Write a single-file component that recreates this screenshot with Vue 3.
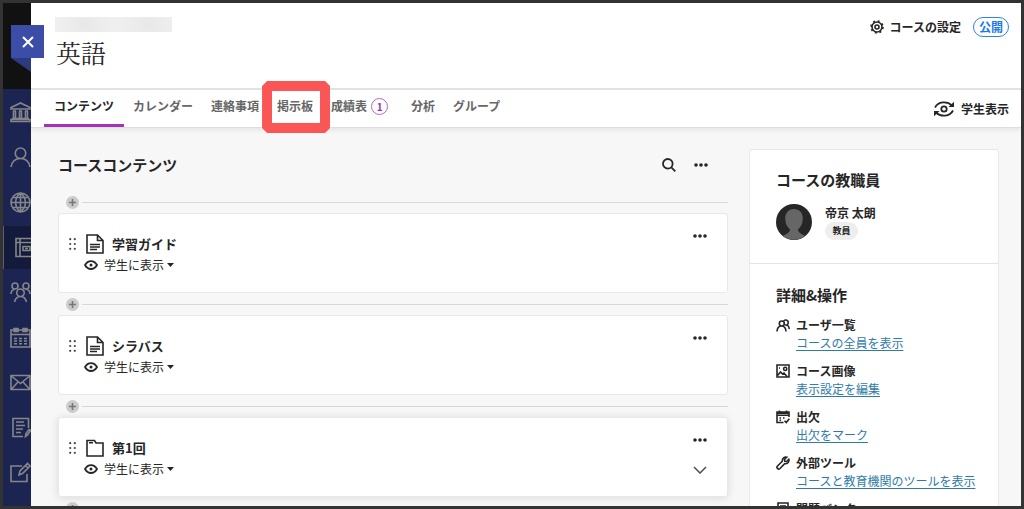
<script setup>
import { ref } from 'vue';

const activeTab = ref('contents');

const tabs = [
  { id: 'contents', label: 'コンテンツ' },
  { id: 'calendar', label: 'カレンダー' },
  { id: 'announcements', label: '連絡事項' },
  { id: 'discussions', label: '掲示板', marked: true },
  { id: 'gradebook', label: '成績表', count: 1 },
  { id: 'analytics', label: '分析' },
  { id: 'groups', label: 'グループ' },
];

const items = [
  { id: 1, title: '学習ガイド', type: 'document' },
  { id: 2, title: 'シラバス', type: 'document' },
  { id: 3, title: '第1回', type: 'folder' },
];

const details = [
  { icon: 'users', title: 'ユーザ一覧', link: 'コースの全員を表示' },
  { icon: 'image', title: 'コース画像', link: '表示設定を編集' },
  { icon: 'attendance', title: '出欠', link: '出欠をマーク' },
  { icon: 'wrench', title: '外部ツール', link: 'コースと教育機関のツールを表示' },
  { icon: 'bank', title: '問題バンク', link: '問題バンクの管理' },
];

const detailIcons = {
  users:
    'M1 13.500c.2-3.500 1.800-5.500 4.500-5.500s4.300 2 4.500 5.500M5.800 3a2.500 2.500 0 1 1 0 5 2.500 2.500 0 0 1 0-5M7.500 3.500a2.500 2.500 0 1 1 3.500 3.200M9 7c2.500-.3 4 1 4.200 4',
  image:
    'M1 1h12v12H1zM1.500 11.500l3-3.500 2 2 1.500-1 3 3.500M9.200 3.300a1.600 1.600 0 1 1 0 3.200 1.600 1.600 0 0 1 0-3.200M3 4h1',
  attendance:
    'M7.500 12.500H1V2h12v5M1 3.200h12M1 5.200h12M3.500.5V3M10.500.5V3M3.500 8h1.500M7 8h1.500M3.500 10.300h1.500M8.500 10.800l1.800 1.800 3-3.800',
  wrench:
    'M12.800 3.200l-2.300 2.300-1.700-.3-.3-1.700L10.800 1.200C8.500.5 6 2.200 6.300 5.300L1.500 10c-1.600 1.700.8 4.100 2.500 2.500l4.700-4.800c3 .3 4.900-2.200 4.100-4.500zM2.800 11.200h.1',
  bank: 'M2 1h10v12H2zM4 4h6M4 7h6M4 10h6',
};

const navItems = [
  {
    label: '教育機関',
    path: 'M1 7V5.500L10.500 1 20 5.500V7zM3 9h3M9 9h3M15 9h3M3.500 9v7M5.500 9v7M9.500 9v7M11.500 9v7M15.500 9v7M17.500 9v7M2 16.500h17M1 19.500h19v-2H1z',
  },
  {
    label: 'プロファイル',
    path: 'M10.500 1a5 5 0 1 1 0 10.500 5 5 0 0 1 0-10.500M1 20c1-5.500 4.500-8.500 9.500-8.500S19 14.500 20 20',
  },
  {
    label: 'アクティビティ',
    path: 'M10.500 1a9.500 9.500 0 1 1 0 19 9.500 9.500 0 0 1 0-19M10.500 1v19M1 10.500h19M3 5.500h15M3 15.500h15M10.500 1c-6.500 5-6.500 14 0 19M10.500 1c6.500 5 6.500 14 0 19',
  },
  {
    label: 'コース',
    active: true,
    path: 'M6 1.500h18v18H6zM6 5.500h18M10 1.500v18M13 9.500h7v4h-7zM15 11.500h3',
  },
  {
    label: '組織',
    path: 'M5 1a3 3 0 1 1 0 6 3 3 0 0 1 0-6M16 1a3 3 0 1 1 0 6 3 3 0 0 1 0-6M10.500 7a3.700 3.700 0 1 1 0 7.500 3.700 3.700 0 0 1 0-7.500M1 12c.2-3 1.500-4.500 3.500-4.500M20 12c-.2-3-1.500-4.500-3.500-4.500M4.500 20c.8-3.500 3-5.500 6-5.500s5.200 2 6 5.500',
  },
  {
    label: 'カレンダー',
    path: 'M1 3h19v17H1zM1 7.500h19M4 1.500h4v3H4zM13 1.500h4v3h-4zM4 11.500h3M9 11.500h3M14 11.500h3M4 14h3M9 14h3M14 14h3M4 16.700h3M9 16.700h3M14 16.700h3',
  },
  { label: 'メッセージ', path: 'M1 3.500h19v14H1zM2 4.500l8.500 7 8.500-7M2 16.500l6-6.500M19 16.500L13 10' },
  {
    label: '成績',
    path: 'M13 19.500H3v-18h15.500V11M6 5h8M6 8.500h9M6 12h7M6 15.500h5M15.500 19.500l.5-3 3-4 1.500 1-3 4.500z',
  },
  {
    label: 'ツール',
    path: 'M12 4H1v15.500h16V12M9 13l1-4 7.500-7.500L20 4l-7.500 7.500zM15.500 3.500L18 6',
  },
];
</script>

<template>
  <div class="app">
    <aside class="rail">
      <div class="rail-top"></div>
      <nav class="rail-nav" aria-label="メイン">
        <a
          v-for="nav in navItems"
          :key="nav.label"
          href="#"
          class="rail-link"
          :class="{ 'rail-link-active': nav.active }"
          :aria-label="nav.label"
        >
          <svg class="rail-icon" viewBox="0 0 21 21"><path :d="nav.path" /></svg>
        </a>
      </nav>
    </aside>
    <span class="close-fold"></span>
    <button class="close-btn" aria-label="閉じる">
      <svg class="line-icon" viewBox="0 0 12 12"><path d="M1 1l10 10M11 1L1 11" /></svg>
    </button>

    <div class="page">
      <header class="header">
        <div>
          <div class="course-id"></div>
          <h1 class="course-name">英語</h1>
        </div>
        <div class="header-actions">
          <button class="text-btn">
            <svg class="gear" viewBox="0 0 14 14">
              <circle cx="7" cy="7" r="5" />
              <circle class="gear-teeth" cx="7" cy="7" r="6" />
              <circle cx="7" cy="7" r="2" />
            </svg>
            コースの設定
          </button>
          <button class="status">公開</button>
        </div>
      </header>

      <div class="tab-bar">
        <nav class="tabs" aria-label="コース">
          <button
            v-for="tab in tabs"
            :key="tab.id"
            class="tab"
            :class="{ 'tab-active': activeTab === tab.id, 'tab-marked': tab.marked }"
            @click="activeTab = tab.id"
          >
            {{ tab.label }}
            <span v-if="tab.count" class="count">{{ tab.count }}</span>
          </button>
        </nav>
        <button class="text-btn">
          <svg class="preview" viewBox="0 0 22 16">
            <path d="M2 6.500C5 .5 14-.5 19 4.500M3 11.500c5 5 14 4 17-2" />
            <path class="solid" d="M15.500 6H21V.8zM6.500 10H1v5.200z" />
            <circle cx="11" cy="8" r="2.700" />
          </svg>
          学生表示
        </button>
      </div>

      <main class="body">
        <section>
          <div class="section-head">
            <h2 class="heading">コースコンテンツ</h2>
            <div class="section-tools">
              <button class="icon-btn" aria-label="検索">
                <svg class="search" viewBox="0 0 14 14">
                  <circle cx="5.800" cy="5.800" r="4.800" />
                  <path d="M9.300 9.300l4 4" />
                </svg>
              </button>
              <button class="icon-btn" aria-label="その他">
                <svg class="dots" viewBox="0 0 14 4">
                  <circle cx="2" cy="2" r="1.800" />
                  <circle cx="7" cy="2" r="1.800" />
                  <circle cx="12" cy="2" r="1.800" />
                </svg>
              </button>
            </div>
          </div>

          <template v-for="item in items" :key="item.id">
            <div class="divider">
              <button class="add-btn" aria-label="追加">
                <svg viewBox="0 0 7 7"><path d="M3.500 0v7M0 3.500h7" /></svg>
              </button>
            </div>
            <article class="card" :class="{ 'card-raised': item.type === 'folder' }">
              <svg class="grip" viewBox="0 0 7 12">
                <circle v-for="n in 6" :key="n" :cx="n % 2 ? 1.2 : 5.8" :cy="1.2 + Math.floor((n - 1) / 2) * 4.8" r="1.1" />
              </svg>
              <div class="card-main">
                <h3 class="card-title">
                  <svg v-if="item.type === 'document'" class="type-icon" viewBox="0 0 18 20">
                    <path d="M1 1h10.500L17 6.500V19H1zM11.500 1v5.500H17M4 10.500h10M4 13h10M4 15.500h7" />
                  </svg>
                  <svg v-else class="type-icon" viewBox="0 0 18 20">
                    <path d="M1 2.500h7.500L10 5h7v13H1zM3 4.800h4" />
                  </svg>
                  {{ item.title }}
                </h3>
                <button class="visibility">
                  <svg class="eye" viewBox="0 0 14 10">
                    <path d="M1 5c3-5.300 9-5.300 12 0-3 5.300-9 5.300-12 0z" />
                    <circle class="solid" cx="7" cy="5" r="1.500" />
                  </svg>
                  学生に表示
                  <svg class="caret" viewBox="0 0 7 4"><path d="M0 0h7L3.500 4z" /></svg>
                </button>
              </div>
              <div class="card-tools">
                <button class="icon-btn" aria-label="その他">
                  <svg class="dots" viewBox="0 0 14 4">
                    <circle cx="2" cy="2" r="1.800" />
                    <circle cx="7" cy="2" r="1.800" />
                    <circle cx="12" cy="2" r="1.800" />
                  </svg>
                </button>
                <button v-if="item.type === 'folder'" class="icon-btn" aria-label="開く">
                  <svg class="chevron" viewBox="0 0 14 8"><path d="M1 1l6 6 6-6" /></svg>
                </button>
              </div>
            </article>
          </template>
          <div class="divider">
            <button class="add-btn" aria-label="追加">
              <svg viewBox="0 0 7 7"><path d="M3.500 0v7M0 3.500h7" /></svg>
            </button>
          </div>
        </section>

        <aside class="side">
          <section class="staff">
            <h2 class="heading">コースの教職員</h2>
            <div class="person">
              <svg class="avatar" viewBox="0 0 36 36">
                <circle cx="18" cy="18" r="18" fill="#262626" />
                <path
                  d="M18 5c-5.500 0-8.800 4-8.800 9.500 0 5 2 8.500 4.800 11 0 3-2.500 3.500-7 6.500a18 18 0 0 0 22 0c-4.500-3-7-3.500-7-6.500 2.800-2.500 4.800-6 4.800-11C26.800 9 23.500 5 18 5z"
                  fill="#666"
                />
              </svg>
              <div>
                <p class="person-name">帝京 太朗</p>
                <span class="role">教員</span>
              </div>
            </div>
          </section>
          <section class="details">
            <h2 class="heading">詳細&amp;操作</h2>
            <ul class="detail-list">
              <li v-for="d in details" :key="d.title" class="detail">
                <svg class="detail-icon" viewBox="0 0 14 14"><path :d="detailIcons[d.icon]" /></svg>
                <div>
                  <h3 class="detail-title">{{ d.title }}</h3>
                  <a href="#" class="detail-link">{{ d.link }}</a>
                </div>
              </li>
            </ul>
          </section>
        </aside>
      </main>
    </div>
  </div>
</template>

<style>
body {
  margin: 0;
}
</style>

<style scoped>
.app {
  position: relative;
  display: flex;
  box-sizing: border-box;
  height: 100vh;
  overflow: hidden;
  border: 3px solid #333;
  background-color: #f7f7f7;
  color: #262626;
  font-family: 'Noto Sans CJK JP', sans-serif;
  font-size: 12px;
  line-height: 18px;
}

button {
  margin: 0;
  padding: 0;
  border: none;
  background: none;
  color: inherit;
  font: inherit;
  cursor: pointer;
}

h1,
h2,
h3,
p,
ul {
  margin: 0;
  padding: 0;
}

svg {
  display: block;
  flex: none;
  fill: none;
  stroke: currentColor;
  stroke-width: 1.6;
}

.solid {
  fill: currentColor;
  stroke: none;
}

/* left rail */
.rail {
  flex: none;
  width: 28px;
  overflow: hidden;
  background-color: #1c2552;
}

.rail-top {
  height: 86px;
  background-color: #111;
}

.rail-nav {
  display: flex;
  flex-direction: column;
  gap: 2px;
  padding-top: 2px;
}

.rail-link {
  display: flex;
  align-items: center;
  height: 43px;
  padding-left: 7px;
  color: #85868a;
}

.rail-link-active {
  background-color: #141a3b;
  box-shadow: inset 1px 0 #5b5e70;
}

.rail-icon {
  width: 21px;
  height: 21px;
}

.close-btn {
  position: absolute;
  top: 22px;
  left: 8px;
  display: flex;
  align-items: center;
  justify-content: center;
  width: 33px;
  height: 33px;
  background-color: #3b4da6;
  color: #fff;
}

.line-icon {
  width: 12px;
  height: 12px;
  stroke-width: 2;
}

.close-fold {
  position: absolute;
  top: 55px;
  left: 8px;
  width: 20px;
  height: 14px;
  background-color: #2c3a7e;
  clip-path: polygon(0 0, 100% 0, 100% 100%);
}

/* header */
.page {
  flex: 1;
  min-width: 0;
}

.header {
  display: flex;
  justify-content: space-between;
  padding: 14px 12px 16px 24px;
  border-bottom: 2px solid #e4e4e4;
  background-color: #fff;
}

.course-id {
  width: 117px;
  height: 15px;
  background: radial-gradient(circle at 25% 50%, #e8e8e8, transparent 30%),
    radial-gradient(circle at 80% 50%, #e8e8e8, transparent 30%), #efefef;
}

.course-name {
  padding-left: 1px;
  font-family: 'Noto Serif CJK JP', 'Noto Sans CJK JP', serif;
  font-size: 25px;
  font-weight: 400;
  line-height: 40px;
}

.header-actions {
  display: flex;
  align-items: center;
  align-self: flex-start;
  gap: 12px;
}

.text-btn {
  display: flex;
  align-items: center;
  gap: 6px;
  font-weight: 700;
}

.gear {
  width: 14px;
  height: 14px;
}

.gear-teeth {
  stroke-dasharray: 2 2.700;
}

.status {
  padding: 0 5px;
  border: 1px solid #2b83ee;
  border-radius: 10px;
  color: #1a7af0;
  font-weight: 700;
}

/* tabs */
.tab-bar {
  position: relative;
  display: flex;
  justify-content: space-between;
  height: 37px;
  padding: 0 12px 0 13px;
  border-bottom: 1px solid #dedede;
  background-color: #fff;
  box-shadow: 0 2px 5px rgba(0, 0, 0, 0.08);
}

.tabs {
  display: flex;
}

.tab {
  position: relative;
  display: flex;
  align-items: center;
  gap: 4px;
  padding: 0 9px 2px;
  border-bottom: 3px solid transparent;
  color: #666;
  font-weight: 700;
}

.tab-active {
  padding-left: 10px;
  padding-right: 10px;
  border-bottom-color: #a234b5;
  color: #262626;
}

/* frame drawn round the highlighted tab */
.tab-marked::after {
  content: '';
  position: absolute;
  top: -9px;
  right: -8px;
  bottom: -9px;
  left: -6px;
  border: 10px solid #fb5656;
  clip-path: polygon(5px 0, calc(100% - 5px) 0, 100% 5px, 100% calc(100% - 5px), calc(100% - 5px) 100%, 5px 100%, 0 calc(100% - 5px), 0 5px);
}

.count {
  width: 15px;
  height: 15px;
  margin: 0 5px 0 0;
  border: 1px solid #b566c4;
  border-radius: 50%;
  color: #a234b5;
  font-size: 10px;
  line-height: 15px;
  text-align: center;
}

.preview {
  width: 22px;
  height: 16px;
  stroke-width: 1.8;
}

/* content */
.body {
  display: grid;
  grid-template-columns: 1fr 250px;
  align-items: start;
  gap: 21px;
  padding: 21px 22px 21px 27px;
}

.heading {
  font-size: 15px;
  font-weight: 700;
  line-height: 20px;
}

.section-head {
  display: flex;
  align-items: center;
  justify-content: space-between;
  height: 32px;
  margin-bottom: 10px;
}

.section-tools {
  display: flex;
  align-items: center;
  gap: 18px;
  padding-right: 20px;
}

.search {
  width: 14px;
  height: 14px;
  stroke-width: 1.8;
}

.dots {
  width: 14px;
  height: 4px;
  fill: currentColor;
  stroke: none;
}

.divider {
  display: flex;
  align-items: center;
  gap: 3px;
  height: 22px;
  padding-left: 8px;
}

.divider::after {
  content: '';
  flex: 1;
  height: 1px;
  background-color: #d8d8d8;
}

.add-btn {
  display: flex;
  align-items: center;
  justify-content: center;
  width: 13px;
  height: 13px;
  border-radius: 50%;
  background-color: #cbcbcb;
  color: #777;
}

.add-btn svg {
  width: 7px;
  height: 7px;
}

.card {
  display: flex;
  box-sizing: border-box;
  min-height: 80px;
  padding: 20px 20px 16px 10px;
  border: 1px solid #e8e8e8;
  border-radius: 3px;
  background-color: #fff;
}

.card-raised {
  box-shadow: 0 1px 8px rgba(0, 0, 0, 0.12);
}

.grip {
  width: 7px;
  height: 12px;
  margin-top: 4px;
  fill: #444;
  stroke: none;
}

.card-main {
  flex: 1;
  padding-left: 8px;
}

.card-title {
  display: flex;
  align-items: center;
  gap: 8px;
  padding-left: 2px;
  font-size: 13px;
  font-weight: 700;
  line-height: 20px;
}

.type-icon {
  width: 18px;
  height: 20px;
}

.visibility {
  display: flex;
  align-items: center;
  gap: 6px;
  margin-top: 2px;
}

.eye {
  width: 14px;
  height: 10px;
  stroke-width: 1.8;
}

.caret {
  width: 7px;
  height: 4px;
  margin-left: -3px;
  fill: currentColor;
  stroke: none;
}

.card-tools {
  display: flex;
  flex-direction: column;
  gap: 24px;
}

.chevron {
  width: 14px;
  height: 8px;
  color: #555;
}

/* right column */
.side {
  box-sizing: border-box;
  border: 1px solid #e8e8e8;
  border-radius: 3px;
  background-color: #fff;
}

.staff {
  padding: 20px 26px 23px;
  border-bottom: 1px solid #e4e4e4;
}

.person {
  display: flex;
  gap: 13px;
  margin-top: 14px;
}

.avatar {
  width: 36px;
  height: 36px;
  stroke: none;
}

.person-name {
  font-weight: 700;
}

.role {
  display: block;
  width: 33px;
  border-radius: 9px;
  background-color: #eee;
  font-size: 9px;
  font-weight: 700;
  text-align: center;
}

.details {
  padding: 21px 20px 20px 26px;
}

.detail-list {
  display: flex;
  flex-direction: column;
  gap: 10px;
  margin-top: 11px;
  list-style: none;
}

.detail {
  display: flex;
  gap: 6px;
}

.detail-icon {
  width: 14px;
  height: 14px;
  margin-top: 2px;
}

.detail-title {
  font-size: 12px;
  font-weight: 700;
}

.detail-link {
  display: block;
  color: #2f7ba8;
  text-underline-offset: 2px;
}
</style>
